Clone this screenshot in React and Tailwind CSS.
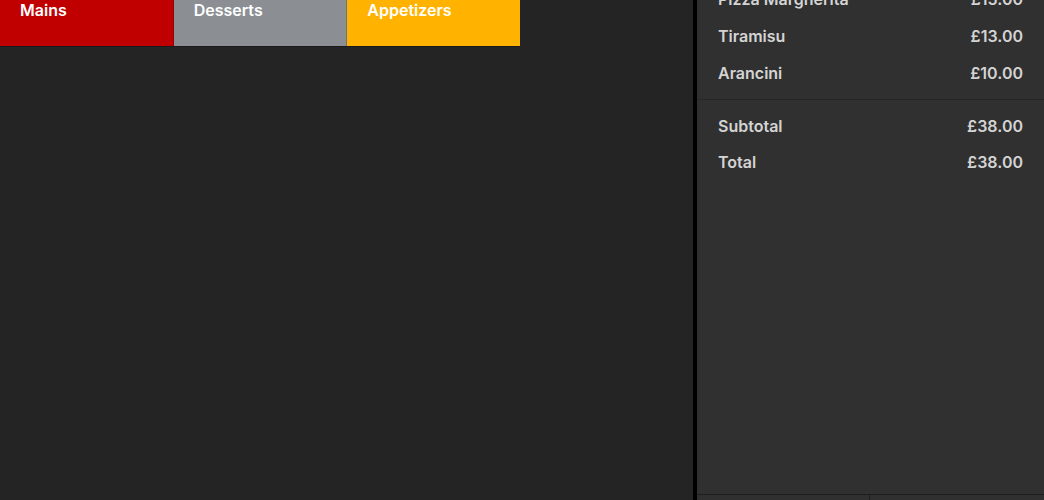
import React from "react";

const tiles = [
  { name: "Mains", cls: "bg-[#c00000]" },
  { name: "Desserts", cls: "bg-[#8b8f94]" },
  { name: "Appetizers", cls: "bg-[#ffb300]" },
];

const items = [
  ["Pizza Margherita", "£15.00"],
  ["Tiramisu", "£13.00"],
  ["Arancini", "£10.00"],
];

const totals = [
  ["Subtotal", "£38.00"],
  ["Total", "£38.00"],
];

function Row({ label, value, h }) {
  return (
    <div className={`flex items-center justify-between ${h}`}>
      <span>{label}</span>
      <span>{value}</span>
    </div>
  );
}

export default function App() {
  return (
    <div
      className="flex h-[500px] w-[1044px] overflow-hidden bg-[#242424]"
      style={{ fontFamily: "Inter, 'Noto Sans', sans-serif" }}
    >
      <div className="flex w-[693px] flex-col">
        <div className="flex w-[520px] border-b border-[#1a1a1a]">
          {tiles.map((t, i) => (
            <div
              key={t.name}
              className={`${t.cls} h-[46px] flex-1 pl-5 text-[16px] font-semibold leading-[20px] text-white ${
                i < 2 ? "border-r border-black/20" : ""
              }`}
            >
              {t.name}
            </div>
          ))}
        </div>
      </div>
      <div className="w-1 bg-black" />
      <div className="flex flex-1 flex-col bg-[#303030] text-[16px] font-semibold text-[#d4d4d4]">
        <div className="flex-1 overflow-hidden">
          <div className="mt-[-20px] px-[21px] pb-[8px]">
            {items.map(([l, v]) => (
              <Row key={l} label={l} value={v} h="h-[37px]" />
            ))}
          </div>
          <div className="h-px bg-[#262626]" />
          <div className="px-[21px] pt-[8px]">
            {totals.map(([l, v]) => (
              <Row key={l} label={l} value={v} h="h-[36px]" />
            ))}
          </div>
        </div>
        <div className="flex h-[6px] border-t border-[#1e1e1e]">
          <div className="w-[173px] border-r border-[#1e1e1e]" />
          <div className="flex-1" />
        </div>
      </div>
    </div>
  );
}
